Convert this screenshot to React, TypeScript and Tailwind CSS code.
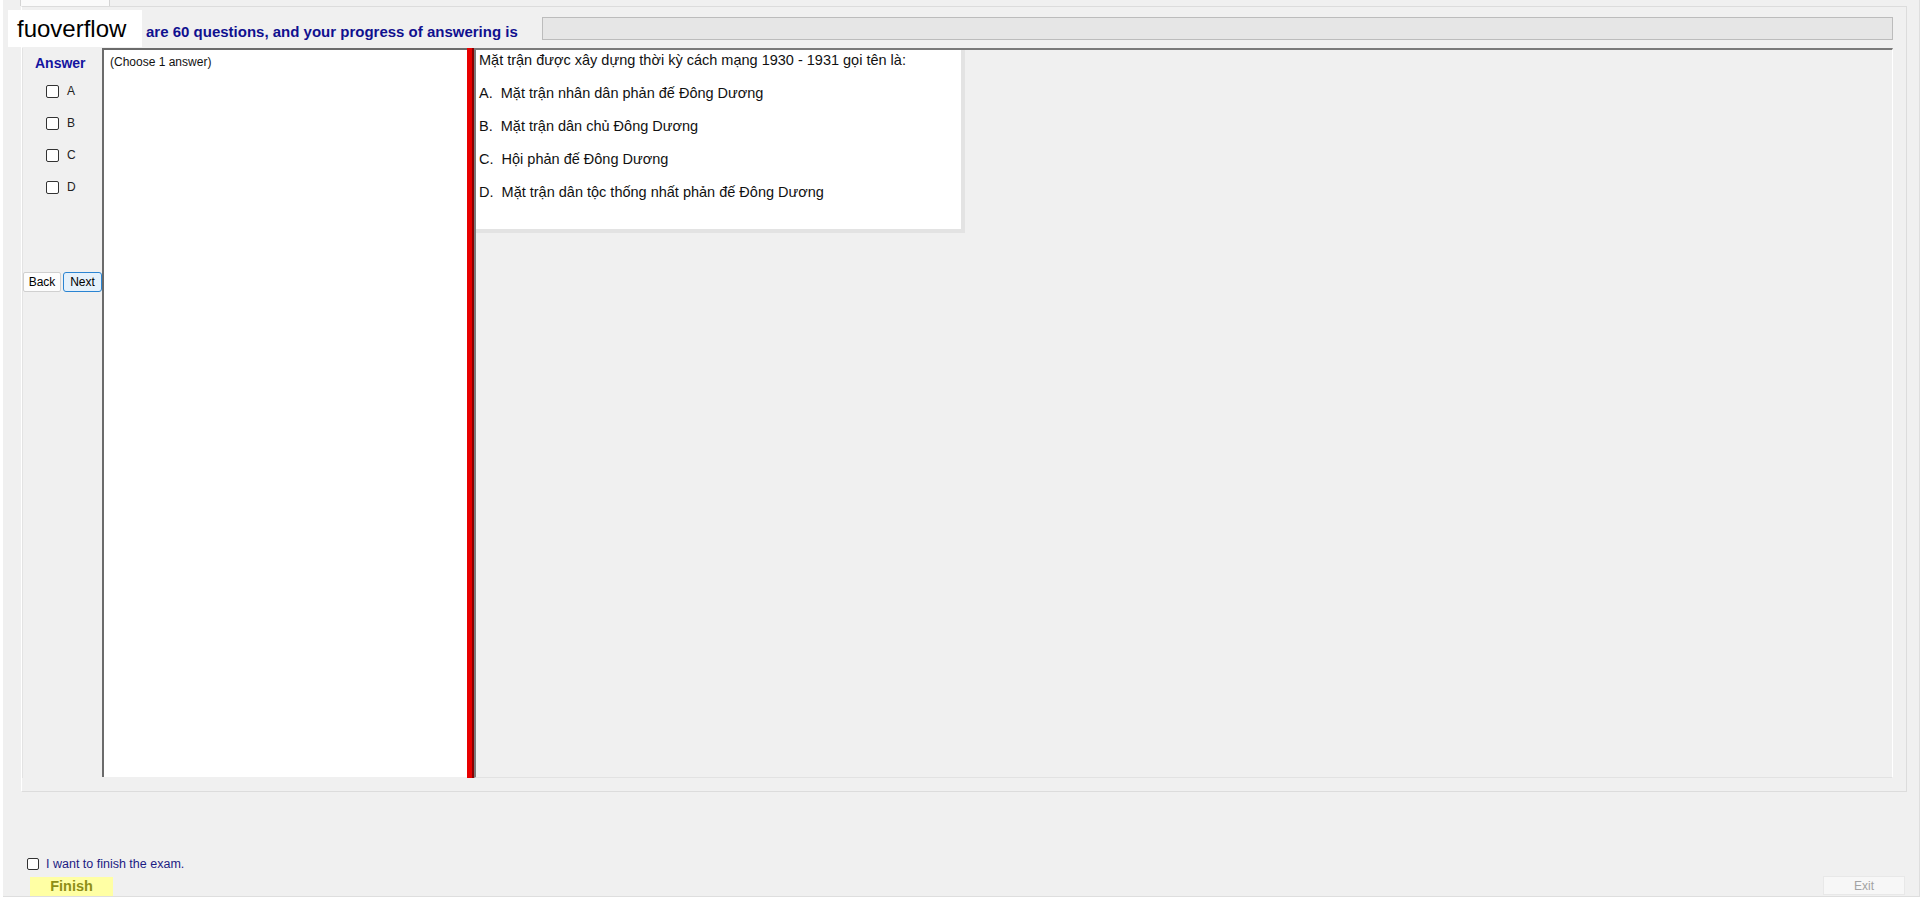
import React from "react";

const Box = ({ size = 13 }: { size?: number }) => (
  <span
    className="inline-block shrink-0 bg-white border border-[#333333] rounded-[2px]"
    style={{ width: size, height: size }}
  />
);

export default function App() {
  const options = [
    "Mặt trận nhân dân phản đế Đông Dương",
    "Mặt trận dân chủ Đông Dương",
    "Hội phản đế Đông Dương",
    "Mặt trận dân tộc thống nhất phản đế Đông Dương",
  ];
  const letters = ["A", "B", "C", "D"];
  return (
    <div className="relative w-[1926px] h-[906px] bg-white font-['Liberation_Sans',Arial,sans-serif] text-black overflow-hidden">
      <div className="ml-[3px] w-[1917px] h-[897px] bg-[#f0f0f0] flex flex-col border-r border-b border-[#dedede]">
        {/* tab strip */}
        <div className="h-[6px] flex">
          <div className="ml-[17px] w-[90px] h-[6px] bg-[#fafafa] border-x border-[#d4d4d4]" />
        </div>
        {/* group box */}
        <div className="ml-[18px] w-[1886px] h-[786px] border border-[#dcdcdc] border-l-white flex flex-col">
          {/* header */}
          <div className="h-[41px] flex">
            <div className="w-[520px] pl-[79px] pt-[16px]">
              <div className="text-[15px] leading-[17px] font-bold text-[#10108f] whitespace-nowrap">
                There are 60 questions, and your progress of answering is
              </div>
            </div>
            <div className="mt-[10px] w-[1351px] h-[23px] bg-[#e6e6e6] border border-[#bcbcbc]" />
          </div>
          {/* inner frame */}
          <div className="flex h-[730px] w-[1871px]">
            {/* answer column */}
            <div className="w-[80px] flex flex-col border-l border-[#e3e3e3]">
              <div className="mt-[7px] pl-[12px] text-[14px] leading-[16px] font-bold text-[#1414a0]">
                Answer
              </div>
              <div className="mt-[14px] flex flex-col gap-[19px] pl-[23px]">
                {letters.map((l) => (
                  <div key={l} className="h-[13px] flex items-center gap-[8px]">
                    <Box />
                    <span className="text-[12px] leading-[13px] text-[#222]">{l}</span>
                  </div>
                ))}
              </div>
              <div className="mt-[78px] flex gap-[2px]">
                <button className="w-[38px] h-[20px] bg-[#fdfdfd] border border-[#d0d0d0] rounded-[2px] text-[12px] leading-[18px] text-black">
                  Back
                </button>
                <button className="w-[39px] h-[20px] bg-[#e5f1fb] border border-[#2a84d2] rounded-[3px] text-[12px] leading-[18px] text-black">
                  Next
                </button>
              </div>
            </div>
            {/* choose panel */}
            <div className="w-[365px] h-[729px] bg-white border-l-2 border-t-2 border-[#6b6b6b] pl-[6px] pt-[5px]">
              <div className="text-[12px] leading-[14px] text-[#111]">(Choose 1 answer)</div>
            </div>
            {/* red splitter */}
            <div className="w-[7px] h-[730px] bg-[#e80000] border-r-2 border-[#8a0000]" />
            {/* question area */}
            <div className="flex-1 h-[730px] border-l-2 border-t-2 border-[#7a7a7a] border-r border-r-white border-b border-b-[#e2e2e2]">
              <div className="w-[489px] h-[183px] bg-white border-r-[4px] border-b-[4px] border-[#e3e3e3] pl-[3px] text-[14.5px] text-[#111]">
                <div className="leading-[20px]">
                  Mặt trận được xây dựng thời kỳ cách mạng 1930 - 1931 gọi tên là:
                </div>
                {options.map((o, i) => (
                  <div key={i} className="mt-[13px] leading-[20px] whitespace-pre">
                    {letters[i] + ".  " + o}
                  </div>
                ))}
              </div>
            </div>
          </div>
        </div>
        {/* bottom area */}
        <div className="flex-1 flex flex-col">
          <div className="mt-[66px] ml-[24px] h-[12px] flex items-center gap-[7px]">
            <Box size={12} />
            <span className="text-[12.5px] leading-[14px] text-[#1c1c84]">I want to finish the exam.</span>
          </div>
          <div className="mt-[7px] flex items-start justify-between">
            <div className="ml-[27px] w-[83px] h-[19px] bg-[#ffffa4] flex items-center justify-center text-[14.5px] font-bold text-[#8e8e16]">
              Finish
            </div>
            <div className="-mt-px mr-[14px] w-[82px] h-[19px] bg-[#f7f7f7] border border-[#e8e8e8] flex items-center justify-center text-[12px] text-[#a3a3a3]">
              Exit
            </div>
          </div>
        </div>
      </div>
      {/* watermark overlay */}
      <div className="absolute left-[8px] top-[10px] w-[134px] h-[37px] bg-white flex items-center pl-[9px] text-[24px] leading-[28px] text-black">
        fuoverflow
      </div>
    </div>
  );
}
